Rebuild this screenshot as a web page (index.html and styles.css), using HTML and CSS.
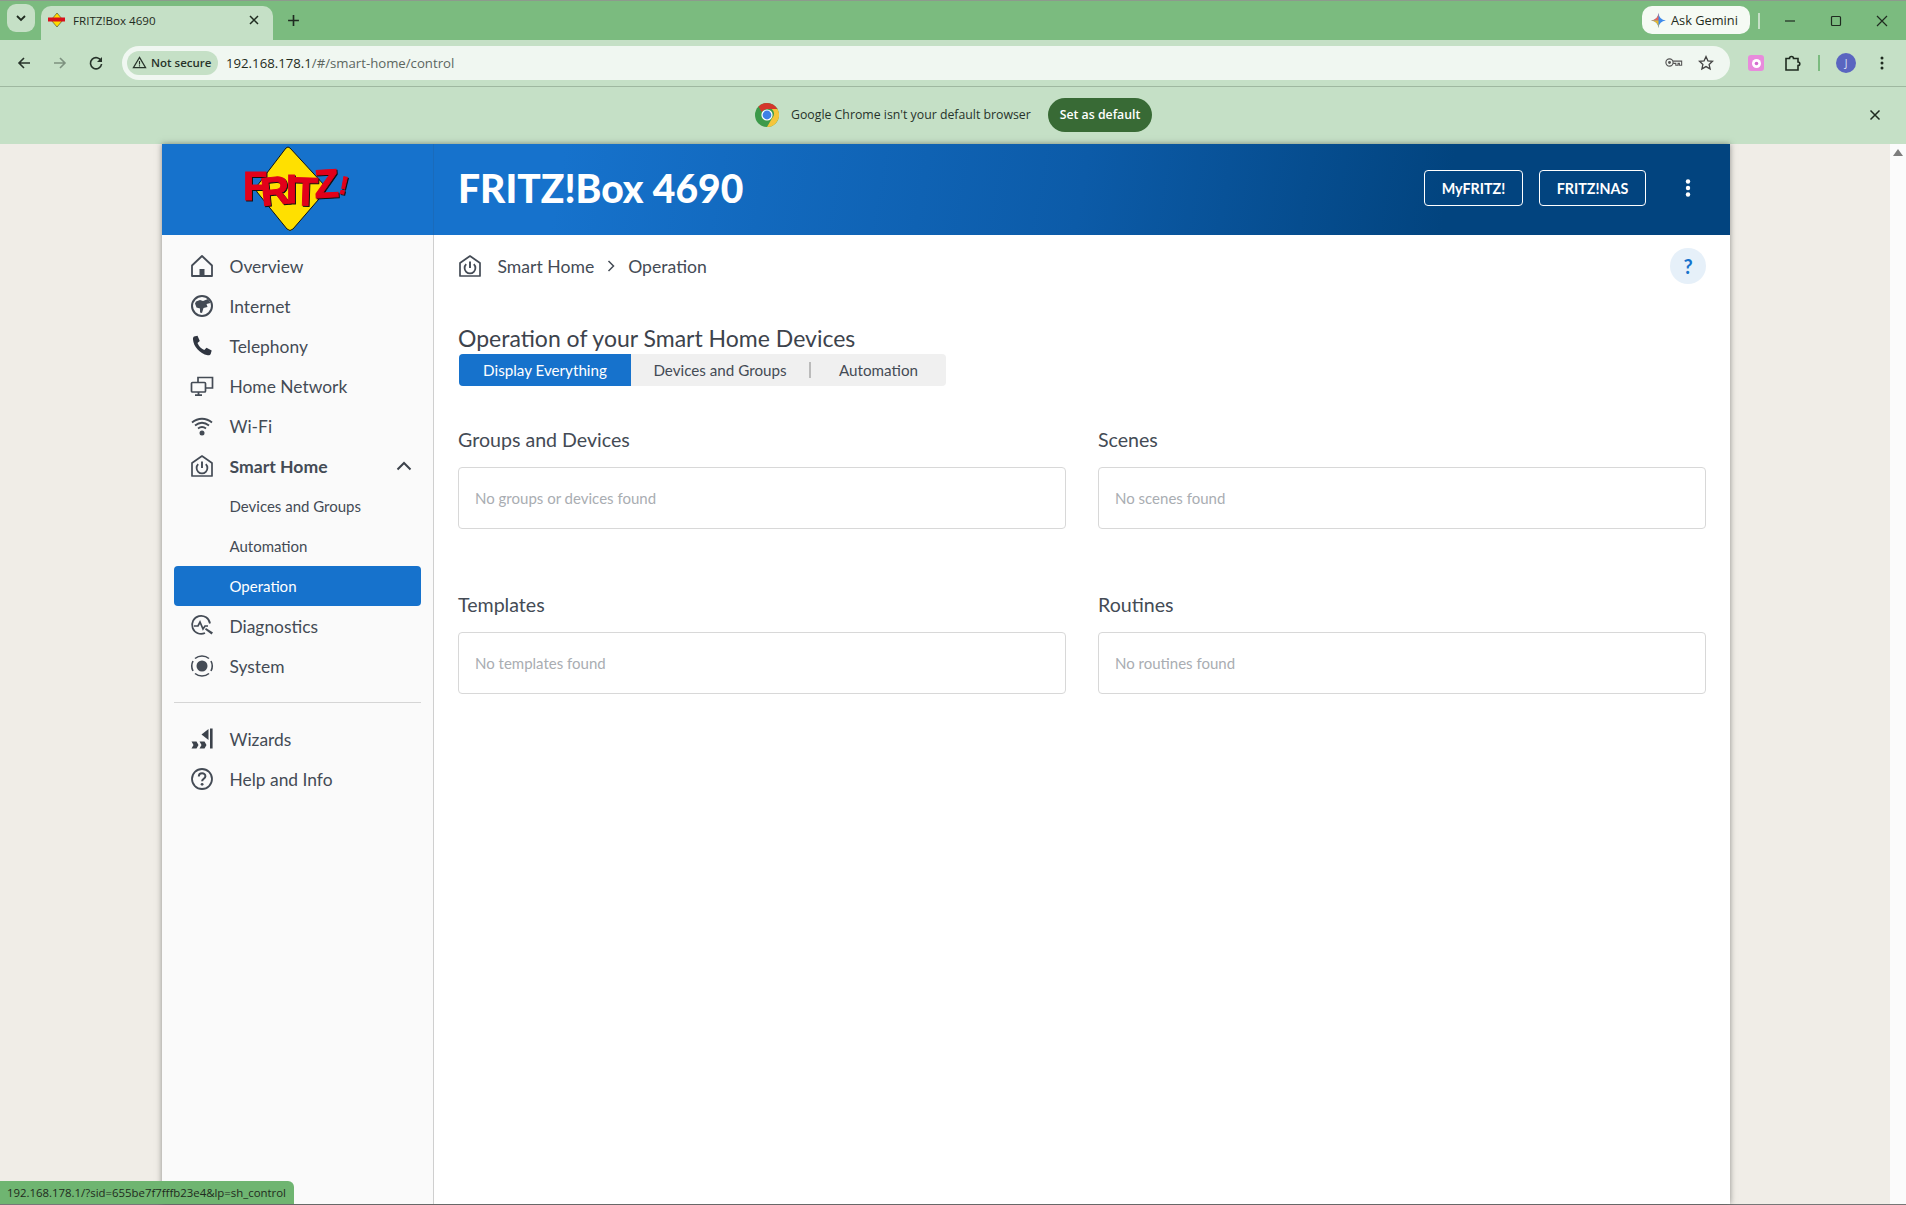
FILE: index.html
```html
<!DOCTYPE html>
<html lang="en">
<head>
<meta charset="utf-8">
<title>FRITZ!Box 4690</title>
<link rel="stylesheet" href="styles.css">
</head>
<body>
<div class="window">
  <div class="tabstrip">
    <button class="tab-search"><svg viewBox="0 0 12 12" class="ic12"><path d="M2 4l4 4 4-4" fill="none" stroke="#1f2b20" stroke-width="1.8"/></svg></button>
    <div class="tab">
      <svg class="favicon" viewBox="0 0 18 14"><path d="M9 0l6 7-6 7-6-7z" fill="#ffdc00" stroke="#222" stroke-width=".5"/><rect x="0" y="4.500" width="17" height="4" fill="#d8121c"/></svg>
      <span class="tab-title">FRITZ!Box 4690</span>
      <svg class="ic12 tab-close" viewBox="0 0 12 12"><path d="M2 2l8 8M10 2l-8 8" stroke="#1f2b20" stroke-width="1.5"/></svg>
    </div>
    <svg class="new-tab" viewBox="0 0 12 12"><path d="M6 1v10M1 6h10" stroke="#1f2b20" stroke-width="1.5"/></svg>
    <div class="gemini">
      <svg viewBox="0 0 16 16" class="ic14"><path d="M8 1Q8.600 7.400 15 8 8.600 8.600 8 15 7.400 8.600 1 8 7.400 7.400 8 1z" fill="#3f8bea"/><path d="M8 1Q7.400 7.400 1 8L8 8z" fill="#e8665a"/><path d="M1 8Q7.400 8.600 8 15L8 8z" fill="#e8b92f"/></svg>
      <span>Ask Gemini</span>
    </div>
    <span class="gem-sep"></span>
    <div class="win-controls">
      <svg viewBox="0 0 12 12"><path d="M1 6h10" stroke="#1f2b20" stroke-width="1.200"/></svg>
      <svg viewBox="0 0 12 12"><rect x="1.500" y="1.500" width="9" height="9" rx="1" fill="none" stroke="#1f2b20" stroke-width="1.200"/></svg>
      <svg viewBox="0 0 12 12"><path d="M1 1l10 10M11 1L1 11" stroke="#1f2b20" stroke-width="1.200"/></svg>
    </div>
  </div>

  <div class="toolbar">
    <svg class="tb-ic" viewBox="0 0 16 16"><path d="M14 8H3M8 3L3 8l5 5" fill="none" stroke="#27332a" stroke-width="1.600"/></svg>
    <svg class="tb-ic muted" viewBox="0 0 16 16"><path d="M2 8h11M8 3l5 5-5 5" fill="none" stroke="#27332a" stroke-width="1.600"/></svg>
    <svg class="tb-ic" viewBox="0 0 16 16"><path d="M13.200 6A5.600 5.600 0 1 0 13.600 9" fill="none" stroke="#27332a" stroke-width="1.600"/><path d="M14 2v5H9z" fill="#27332a"/></svg>
    <div class="omnibox">
      <div class="chip">
        <svg viewBox="0 0 16 16" class="ic14"><path d="M8 2.500L14.500 13.500h-13z" fill="none" stroke="#27332a" stroke-width="1.300"/><path d="M8 6.500v3.600M8 11v1.200" stroke="#27332a" stroke-width="1.200"/></svg>
        <span>Not secure</span>
      </div>
      <span class="url"><span class="url-host">192.168.178.1</span>/#/smart-home/control</span>
      <svg class="omni-key" viewBox="0 0 20 12"><circle cx="5" cy="6" r="4" fill="none" stroke="#555" stroke-width="1.300"/><circle cx="5" cy="6" r="1.600" fill="#555"/><path d="M9 4.500h9.500v4.500h-2.500V7h-1.500v2H12V7H9" fill="none" stroke="#555" stroke-width="1.200"/></svg>
      <svg class="omni-star" viewBox="0 0 16 16"><path d="M8 1.600l1.900 4.200 4.600.5-3.400 3.100 1 4.500L8 11.600l-4.100 2.300 1-4.500L1.500 6.300l4.600-.5z" fill="none" stroke="#444" stroke-width="1.300"/></svg>
    </div>
    <svg class="ext-app" viewBox="0 0 16 16"><rect width="16" height="16" rx="3" fill="#e88bdc"/><circle cx="8.500" cy="8.500" r="4.500" fill="#fff"/><circle cx="8.500" cy="8.500" r="1.800" fill="#d36bd0"/></svg>
    <svg class="ext-puzzle" viewBox="0 0 18 18"><path d="M2 4.500h3.500a2 2 0 0 1 4 0H14V8a1.800 1.800 0 0 1 0 3.600V16H2z" fill="none" stroke="#1f2b20" stroke-width="1.600"/></svg>
    <span class="tb-sep"></span>
    <span class="avatar">J</span>
    <svg class="tb-more" viewBox="0 0 4 16"><circle cx="2" cy="3" r="1.500"/><circle cx="2" cy="8" r="1.500"/><circle cx="2" cy="13" r="1.500"/></svg>
  </div>

  <div class="infobar">
    <svg class="chrome-logo" viewBox="0 0 24 24"><circle cx="12" cy="12" r="12" fill="#3c9a4a"/><path d="M12 0a12 12 0 0 1 10.400 6H12a6 6 0 0 0-5.200 3L3.500 3.500A12 12 0 0 1 12 0z" fill="#d4362c"/><path d="M22.400 6A12 12 0 0 1 12 24l5.200-9A6 6 0 0 0 16.800 6z" fill="#f5c53a"/><circle cx="12" cy="12" r="5.600" fill="#fff"/><circle cx="12" cy="12" r="4.400" fill="#3d80e6"/></svg>
    <span class="info-text">Google Chrome isn't your default browser</span>
    <span class="info-btn">Set as default</span>
    <svg class="info-close" viewBox="0 0 12 12"><path d="M1.500 1.500l9 9M10.500 1.500l-9 9" stroke="#1f2b20" stroke-width="1.500"/></svg>
  </div>

  <div class="viewport">
    <div class="app">
      <header class="app-header">
        <div class="brand">
          <svg class="logo" viewBox="0 0 107 86">
            <path d="M47 2L82 40Q84 43 82 46L50 83Q47 86 44 83L14 46Q12 43 14 40L43 2Q45 0 47 2z" fill="#ffe000" stroke="#111" stroke-width="1"/>
            <g class="logo-letters">
              <text x="0" y="54">F</text>
              <text x="19" y="60" transform="rotate(-6 19 60)">R</text>
              <text x="43" y="57" class="logo-i">I</text>
              <text x="50" y="59" transform="rotate(2 50 59)">T</text>
              <text x="72" y="52" transform="rotate(-3 72 52)">Z</text>
              <text x="95" y="47" class="logo-bang" transform="rotate(12 95 47)">!</text>
            </g>
          </svg>
        </div>
        <div class="header-main">
          <h1 class="box-name">FRITZ!Box 4690</h1>
          <div class="header-actions">
            <a class="hdr-btn hdr-btn-my">MyFRITZ!</a>
            <a class="hdr-btn hdr-btn-nas">FRITZ!NAS</a>
            <svg class="hdr-more" viewBox="0 0 6 20"><circle cx="3" cy="3.500" r="2.200"/><circle cx="3" cy="10" r="2.200"/><circle cx="3" cy="16.500" r="2.200"/></svg>
          </div>
        </div>
      </header>
      <div class="app-body">
        <nav class="sidebar">
          <a class="nav-item"><svg class="nav-ic" viewBox="0 0 24 24"><path d="M2 11.500L12 2l10 9.500V22H2z" fill="none" stroke="#444b55" stroke-width="1.800" stroke-linejoin="round"/><rect x="9.500" y="15" width="5" height="7" fill="#444b55"/></svg><span>Overview</span></a>
          <a class="nav-item"><svg class="nav-ic" viewBox="0 0 24 24"><circle cx="12" cy="12" r="10" fill="none" stroke="#444b55" stroke-width="2"/><path d="M6 7.500l4-1.500 3 1 5-2 2.500 4-4 1 1 3-4 1-1.500 5-2-.5v-4l-3.500-1-1.500-4z" fill="#444b55"/></svg><span>Internet</span></a>
          <a class="nav-item"><svg class="nav-ic" viewBox="0 0 24 24"><path d="M4 2.500l3.500-.8 2.300 5.300-2.300 2c1.300 3.200 3.500 5.500 6.800 7l2.200-2.200 5.200 2.700-1 3.500c-.4 1-1.500 1.500-3 1.300C9.500 19.500 3.500 12.500 3 5.500c-.1-1.300.2-2.500 1-3z" fill="#2f3540"/></svg><span>Telephony</span></a>
          <a class="nav-item"><svg class="nav-ic" viewBox="0 0 24 24"><path d="M8 8V3.500h14.500V14H15" fill="none" stroke="#444b55" stroke-width="1.700"/><rect x="1.500" y="8.500" width="14" height="9.500" rx="1" fill="none" stroke="#444b55" stroke-width="1.700"/><path d="M8.500 18v2.500M5 21.200h7" stroke="#444b55" stroke-width="1.800"/></svg><span>Home Network</span></a>
          <a class="nav-item"><svg class="nav-ic" viewBox="0 0 24 24"><path d="M2 8.500c6-5 14-5 20 0M5 11.500c4.500-3.500 9.500-3.500 14 0M8 14.500c2.700-2 5.300-2 8 0" fill="none" stroke="#444b55" stroke-width="1.800"/><circle cx="12" cy="19" r="2.500" fill="#444b55"/></svg><span>Wi-Fi</span></a>
          <a class="nav-item nav-open"><svg class="nav-ic" viewBox="0 0 24 24"><path d="M2 9L12 2l10 7v13H2z" fill="none" stroke="#444b55" stroke-width="1.700" stroke-linejoin="round"/><path d="M8.200 10.200a5.400 5.400 0 1 0 7.600 0" fill="none" stroke="#444b55" stroke-width="1.800"/><path d="M12 7.500v6.500" stroke="#444b55" stroke-width="1.900"/></svg><span>Smart Home</span><svg class="nav-chev" viewBox="0 0 16 10"><path d="M1.500 8.500L8 2l6.500 6.500" fill="none" stroke="#3c424b" stroke-width="2"/></svg></a>
          <a class="nav-sub">Devices and Groups</a>
          <a class="nav-sub">Automation</a>
          <a class="nav-sub nav-active">Operation</a>
          <a class="nav-item"><svg class="nav-ic" viewBox="0 0 24 24"><path d="M20 9.500A9 9 0 1 0 15 19" fill="none" stroke="#444b55" stroke-width="1.800"/><path d="M4 12h4l2-4 3 7 2-3h3" fill="none" stroke="#444b55" stroke-width="1.700"/><path d="M16 14l7 4.500-1.500 2-6.500-5z" fill="#444b55"/></svg><span>Diagnostics</span></a>
          <a class="nav-item"><svg class="nav-ic" viewBox="0 0 24 24"><path d="M5 4.500A11 11 0 0 1 19 4.500M19 19.500a11 11 0 0 1-14 0M3 7a11 11 0 0 0 0 10M21 7a11 11 0 0 1 0 10" fill="none" stroke="#444b55" stroke-width="1.600"/><circle cx="12" cy="12" r="5.500" fill="#444b55"/></svg><span>System</span></a>
          <hr class="nav-div">
          <a class="nav-item"><svg class="nav-ic" viewBox="0 0 24 24"><path d="M1.500 14.500h5l2 3.500-2 3.500h-5l2-3.500zM9.500 14.500h5l2 3.500-2 3.500h-5l2-3.500z" fill="#3c424b"/><path d="M11.500 7.500l7-5.500v11z" fill="#3c424b"/><rect x="20" y="1.500" width="2.600" height="20" fill="#3c424b"/></svg><span>Wizards</span></a>
          <a class="nav-item"><svg class="nav-ic" viewBox="0 0 24 24"><circle cx="12" cy="12" r="10" fill="none" stroke="#444b55" stroke-width="1.800"/><path d="M8.800 9.500c0-4.200 6.600-4.200 6.600-.3 0 2.500-3.300 2.500-3.300 5" fill="none" stroke="#444b55" stroke-width="2"/><circle cx="12.100" cy="17.300" r="1.400" fill="#444b55"/></svg><span>Help and Info</span></a>
        </nav>
        <main class="content">
          <div class="crumbs">
            <svg class="nav-ic" viewBox="0 0 24 24"><path d="M2 9L12 2l10 7v13H2z" fill="none" stroke="#444b55" stroke-width="1.700" stroke-linejoin="round"/><path d="M8.200 10.200a5.400 5.400 0 1 0 7.600 0" fill="none" stroke="#444b55" stroke-width="1.800"/><path d="M12 7.500v6.500" stroke="#444b55" stroke-width="1.900"/></svg>
            <span class="crumb crumb-first">Smart Home</span>
            <svg class="crumb-sep" viewBox="0 0 8 12"><path d="M1.500 1l5 5-5 5" fill="none" stroke="#444b55" stroke-width="1.500"/></svg>
            <span class="crumb">Operation</span>
            <span class="help-btn">?</span>
          </div>
          <h2 class="page-title">Operation of your Smart Home Devices</h2>
          <div class="tabs">
            <span class="tabs-item tabs-active">Display Everything</span>
            <span class="tabs-item tabs-devices">Devices and Groups</span>
            <span class="tabs-sep"></span>
            <span class="tabs-item tabs-auto">Automation</span>
          </div>
          <div class="sections">
            <section><h3 class="sec-label">Groups and Devices</h3><div class="sec-box">No groups or devices found</div></section>
            <section><h3 class="sec-label">Scenes</h3><div class="sec-box">No scenes found</div></section>
            <section><h3 class="sec-label">Templates</h3><div class="sec-box">No templates found</div></section>
            <section><h3 class="sec-label">Routines</h3><div class="sec-box">No routines found</div></section>
          </div>
        </main>
      </div>
    </div>
    <div class="page-scroll"><svg class="scroll-up" viewBox="0 0 10 7"><path d="M5 0l5 7H0z" fill="#7d7d7d"/></svg></div>
    <div class="status-bubble">192.168.178.1/?sid=655be7f7fffb23e4&amp;lp=sh_control</div>
  </div>
</div>
</body>
</html>
```

FILE: styles.css
```css
* { box-sizing: border-box; }
html, body { margin: 0; height: 100%; overflow: hidden; }
body { font-family: "Lato", "Liberation Sans", sans-serif; color: #444b55; background: #f0ede7; }
svg { display: block; flex: none; }
a { color: inherit; text-decoration: none; }

.window { height: 1205px; display: flex; flex-direction: column; border-bottom: 1px solid #777; }

/* tab strip */
.tabstrip { height: 40px; flex: none; background: #7bbb7f; border-top: 1px solid #8d9a8d; display: flex; align-items: center; font-family: "Open Sans", sans-serif; color: #1f2b20; }
.tab-search { width: 28px; height: 28px; margin: 0 6px 6px 7px; padding: 0; border: 0; border-radius: 9px; background: #c5e0c6; display: flex; align-items: center; justify-content: center; }
.ic12 { width: 12px; height: 12px; }
.ic14 { width: 15px; height: 15px; }
.tab { width: 232px; height: 34px; align-self: flex-end; background: #c5e0c6; border-radius: 10px 10px 0 0; display: flex; align-items: center; padding: 0 13px 6px 7px; font-size: 11.600px; }
.favicon { width: 18px; height: 14px; margin-right: 7px; }
.tab-title { flex: 1; white-space: nowrap; }
.new-tab { width: 13px; height: 13px; margin: 0 0 0 14px; }
.gemini { margin-left: auto; width: 108px; height: 28px; margin-bottom: 1px; background: #f5faf4; border-radius: 10px; display: flex; align-items: center; gap: 4px; padding-left: 8px; font-size: 12.800px; font-weight: 500; white-space: nowrap; }
.gemini .ic14 { width: 17px; height: 17px; }
.gem-sep { width: 2px; height: 16px; background: #c5e0c6; margin: 0 0 0 8px; }
.win-controls { display: flex; gap: 34px; margin: 0 18px 0 24px; }
.win-controls svg { width: 12px; height: 12px; }

/* toolbar */
.toolbar { height: 47px; flex: none; background: #c5e0c6; border-bottom: 1px solid #9fb8a0; display: flex; align-items: center; padding-left: 16px; font-family: "Open Sans", sans-serif; }
.tb-ic { width: 16px; height: 16px; margin-right: 20px; }
.tb-ic.muted { opacity: .45; }
.toolbar .tb-ic:nth-child(3) { margin-right: 18px; }
.omnibox { width: 1608px; height: 34px; margin-top: -1px; background: #f0f7f1; border-radius: 17px; display: flex; align-items: center; padding: 0 16px 0 5px; flex: none; }
.chip { width: 91px; height: 24px; background: #c5e0c6; border-radius: 12px; display: flex; align-items: center; gap: 4px; padding-left: 5px; font-size: 11.500px; font-weight: 600; color: #27332a; white-space: nowrap; }
.url { margin-left: 8px; font-size: 13.200px; color: #5c665f; white-space: nowrap; flex: 1; }
.url-host { color: #1f2b20; }
.omni-key { width: 18px; height: 11px; margin-right: 15px; }
.omni-star { width: 16px; height: 16px; }
.ext-app { width: 16px; height: 16px; margin-left: 18px; }
.ext-puzzle { width: 18px; height: 18px; margin-left: 20px; }
.tb-sep { width: 2px; height: 16px; background: #7bbb7f; margin-left: 16px; }
.avatar { width: 20px; height: 20px; margin-left: 16px; border-radius: 50%; background: #5a65c0; color: #dfe3f7; font-size: 10px; text-align: center; line-height: 20px; }
.tb-more { width: 4px; height: 16px; margin-left: 24px; fill: #1f2b20; }

/* infobar */
.infobar { height: 57px; flex: none; background: #c5e0c6; display: flex; align-items: center; padding: 0 0 2px 755px; font-family: "Open Sans", sans-serif; font-size: 12.300px; color: #27332a; }
.chrome-logo { width: 24px; height: 24px; margin-right: 12px; }
.info-text { width: 257px; white-space: nowrap; }
.info-btn { width: 104px; height: 34px; background: #386a35; color: #fff; border-radius: 17px; font-weight: 600; display: flex; align-items: center; justify-content: center; white-space: nowrap; }
.info-close { width: 12px; height: 12px; margin-left: 717px; }

/* page */
.viewport { flex: 1; min-height: 0; position: relative; display: flex; background: #f0ede7; }
.app { width: 1568px; margin: 0 160px 0 162px; flex: none; background: #fff; box-shadow: 0 0 6px rgba(60, 60, 60, .55); display: flex; flex-direction: column; }
.page-scroll { width: 16px; flex: none; background: #fbfbfb; }
.scroll-up { width: 10px; height: 7px; margin: 5px auto 0; }
.status-bubble { position: absolute; left: 0; bottom: 0; width: 294px; height: 23px; padding-left: 7px; background: #6fb571; border-radius: 0 6px 0 0; color: #1f2b20; font-family: "Open Sans", sans-serif; font-size: 11.400px; line-height: 24px; white-space: nowrap; }

/* header */
.app-header { height: 91px; flex: none; display: flex; background: #1672cc; }
.brand { width: 272px; flex: none; border-right: 1px solid #1a6bbb; padding: 2px 0 0 81px; }
.logo { width: 107px; height: 86px; }
.logo-letters { font-family: "Liberation Sans", sans-serif; font-weight: 700; font-size: 40px; fill: #e2001a; stroke: #e2001a; stroke-width: 1; filter: drop-shadow(1.500px 1.500px 0 #111); }
.logo-bang { font-size: 25px; }
.header-main { flex: 1; display: flex; align-items: center; padding: 0 41px 3px 24px; background: linear-gradient(100deg, #1672cc 10%, #0c5ba8 50%, #02447f 78%, #02447f 100%); }
.box-name { margin: 0; font-size: 39px; font-weight: 900; color: #fff; white-space: nowrap; }
.header-actions { margin-left: auto; display: flex; align-items: center; }
.hdr-btn { height: 36px; border: 1px solid #fff; border-radius: 4px; color: #fff; font-size: 14.300px; font-weight: 700; display: flex; align-items: center; justify-content: center; white-space: nowrap; }
.hdr-btn-my { width: 99px; margin-right: 16px; }
.hdr-btn-nas { width: 107px; margin-right: 39px; }
.hdr-more { width: 6px; height: 20px; fill: #fff; margin-right: -2px; }

.app-body { flex: 1; min-height: 0; display: flex; }

/* sidebar */
.sidebar { width: 272px; flex: none; background: #fafafa; border-right: 1px solid #cfcfcf; padding: 11px 12px 0 12px; }
.nav-item, .nav-sub { display: flex; align-items: center; height: 40px; white-space: nowrap; }
.nav-item { font-size: 17.400px; padding-left: 16px; gap: 15.500px; }
.nav-ic { width: 24px; height: 24px; }
.nav-open { font-weight: 700; font-size: 17.600px; }
.nav-chev { width: 16px; height: 10px; margin-left: auto; margin-right: 9px; }
.nav-sub { font-size: 15px; padding-left: 55.500px; }
.nav-active { background: #1672cc; color: #fff; border-radius: 4px; }
.nav-div { height: 1px; margin: 16px 0; border: 0; background: #d5d5d5; }

/* content */
.content { flex: 1; min-width: 0; padding: 13px 24px 0 24px; }
.crumbs { height: 36px; display: flex; align-items: center; font-size: 17.600px; }
.crumb-first { margin-left: 15.500px; }
.crumb-sep { width: 8px; height: 12px; margin: 0 13px 0 13px; }
.help-btn { margin-left: auto; width: 36px; height: 36px; border-radius: 50%; background: #e6f0f9; color: #1672cc; font-size: 20px; font-weight: 700; display: flex; align-items: center; justify-content: center; }
.page-title { margin: 39px 0 1px; font-size: 23px; line-height: 30px; font-weight: 400; color: #3d434c; white-space: nowrap; }
.tabs { width: 487px; height: 32px; margin-left: 1px; background: #f0f0f0; border-radius: 4px; display: flex; align-items: center; font-size: 15.200px; }
.tabs-item { white-space: nowrap; }
.tabs-active { width: 172px; height: 32px; background: #1672cc; color: #fff; border-radius: 4px 0 0 4px; display: flex; align-items: center; justify-content: center; }
.tabs-devices { width: 178px; text-align: center; }
.tabs-sep { width: 2px; height: 16px; background: #bbb; }
.tabs-auto { flex: 1; text-align: center; }
.sections { margin-top: 40px; display: grid; grid-template-columns: 608px 608px; column-gap: 32px; row-gap: 62px; }
.sec-label { margin: 0 0 13px; font-size: 19.600px; line-height: 28px; font-weight: 400; color: #444b55; }
.sec-box { height: 62px; border: 1px solid #d8d8d8; border-radius: 4px; padding-left: 16px; display: flex; align-items: center; font-size: 15px; color: #a9adb2; background: #fff; }
```
